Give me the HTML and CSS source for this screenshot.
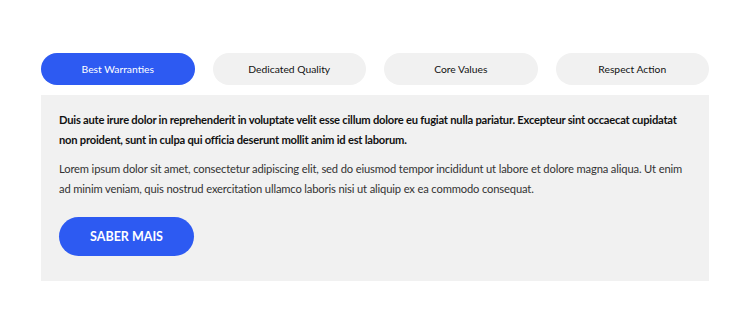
FILE: index.html
```html
<!DOCTYPE html>
<html>
<head>
<meta charset="utf-8">
<link rel="stylesheet" href="styles.css">
</head>
<body>
<div class="wrap">
  <div class="tabs">
    <div class="tab active">Best Warranties</div>
    <div class="tab">Dedicated Quality</div>
    <div class="tab">Core Values</div>
    <div class="tab">Respect Action</div>
  </div>
  <div class="panel">
    <p class="lead">Duis aute irure dolor in reprehenderit in voluptate velit esse cillum dolore eu fugiat nulla pariatur. Excepteur sint occaecat cupidatat non proident, sunt in culpa qui officia deserunt mollit anim id est laborum.</p>
    <p class="body">Lorem ipsum dolor sit amet, consectetur adipiscing elit, sed do eiusmod tempor incididunt ut labore et dolore magna aliqua. Ut enim ad minim veniam, quis nostrud exercitation ullamco laboris nisi ut aliquip ex ea commodo consequat.</p>
    <div class="btn">SABER MAIS</div>
  </div>
</div>
</body>
</html>
```
FILE: styles.css
```css
html, body { margin: 0; padding: 0; background: #fff; }
body { font-family: "Lato", "Liberation Sans", sans-serif; }
.wrap { padding: 53px 41px 0 41px; }
.tabs { display: flex; gap: 18px; }
.tab {
  flex: 1;
  height: 32px;
  border-radius: 16px;
  background: #f1f1f1;
  color: #111;
  font-size: 10.3px;
  display: flex;
  align-items: center;
  justify-content: center;
}
.tab.active { background: #2d5af2; color: #fff; }
.panel {
  margin-top: 10px;
  background: #f1f1f1;
  padding: 15px 18px 25px 18px;
}
.lead {
  margin: 0;
  font-size: 11.2px;
  line-height: 20px;
  letter-spacing: -0.23px;
  font-weight: 700;
  color: #111;
}
.body {
  margin: 9px 0 0 0;
  font-size: 11.2px;
  line-height: 20px;
  letter-spacing: -0.15px;
  color: #333;
}
.btn {
  margin-top: 18px;
  width: 135px;
  height: 39px;
  border-radius: 20px;
  background: #2d5af2;
  color: #fff;
  font-size: 12.5px;
  font-weight: 700;
  display: flex;
  align-items: center;
  justify-content: center;
}
```
